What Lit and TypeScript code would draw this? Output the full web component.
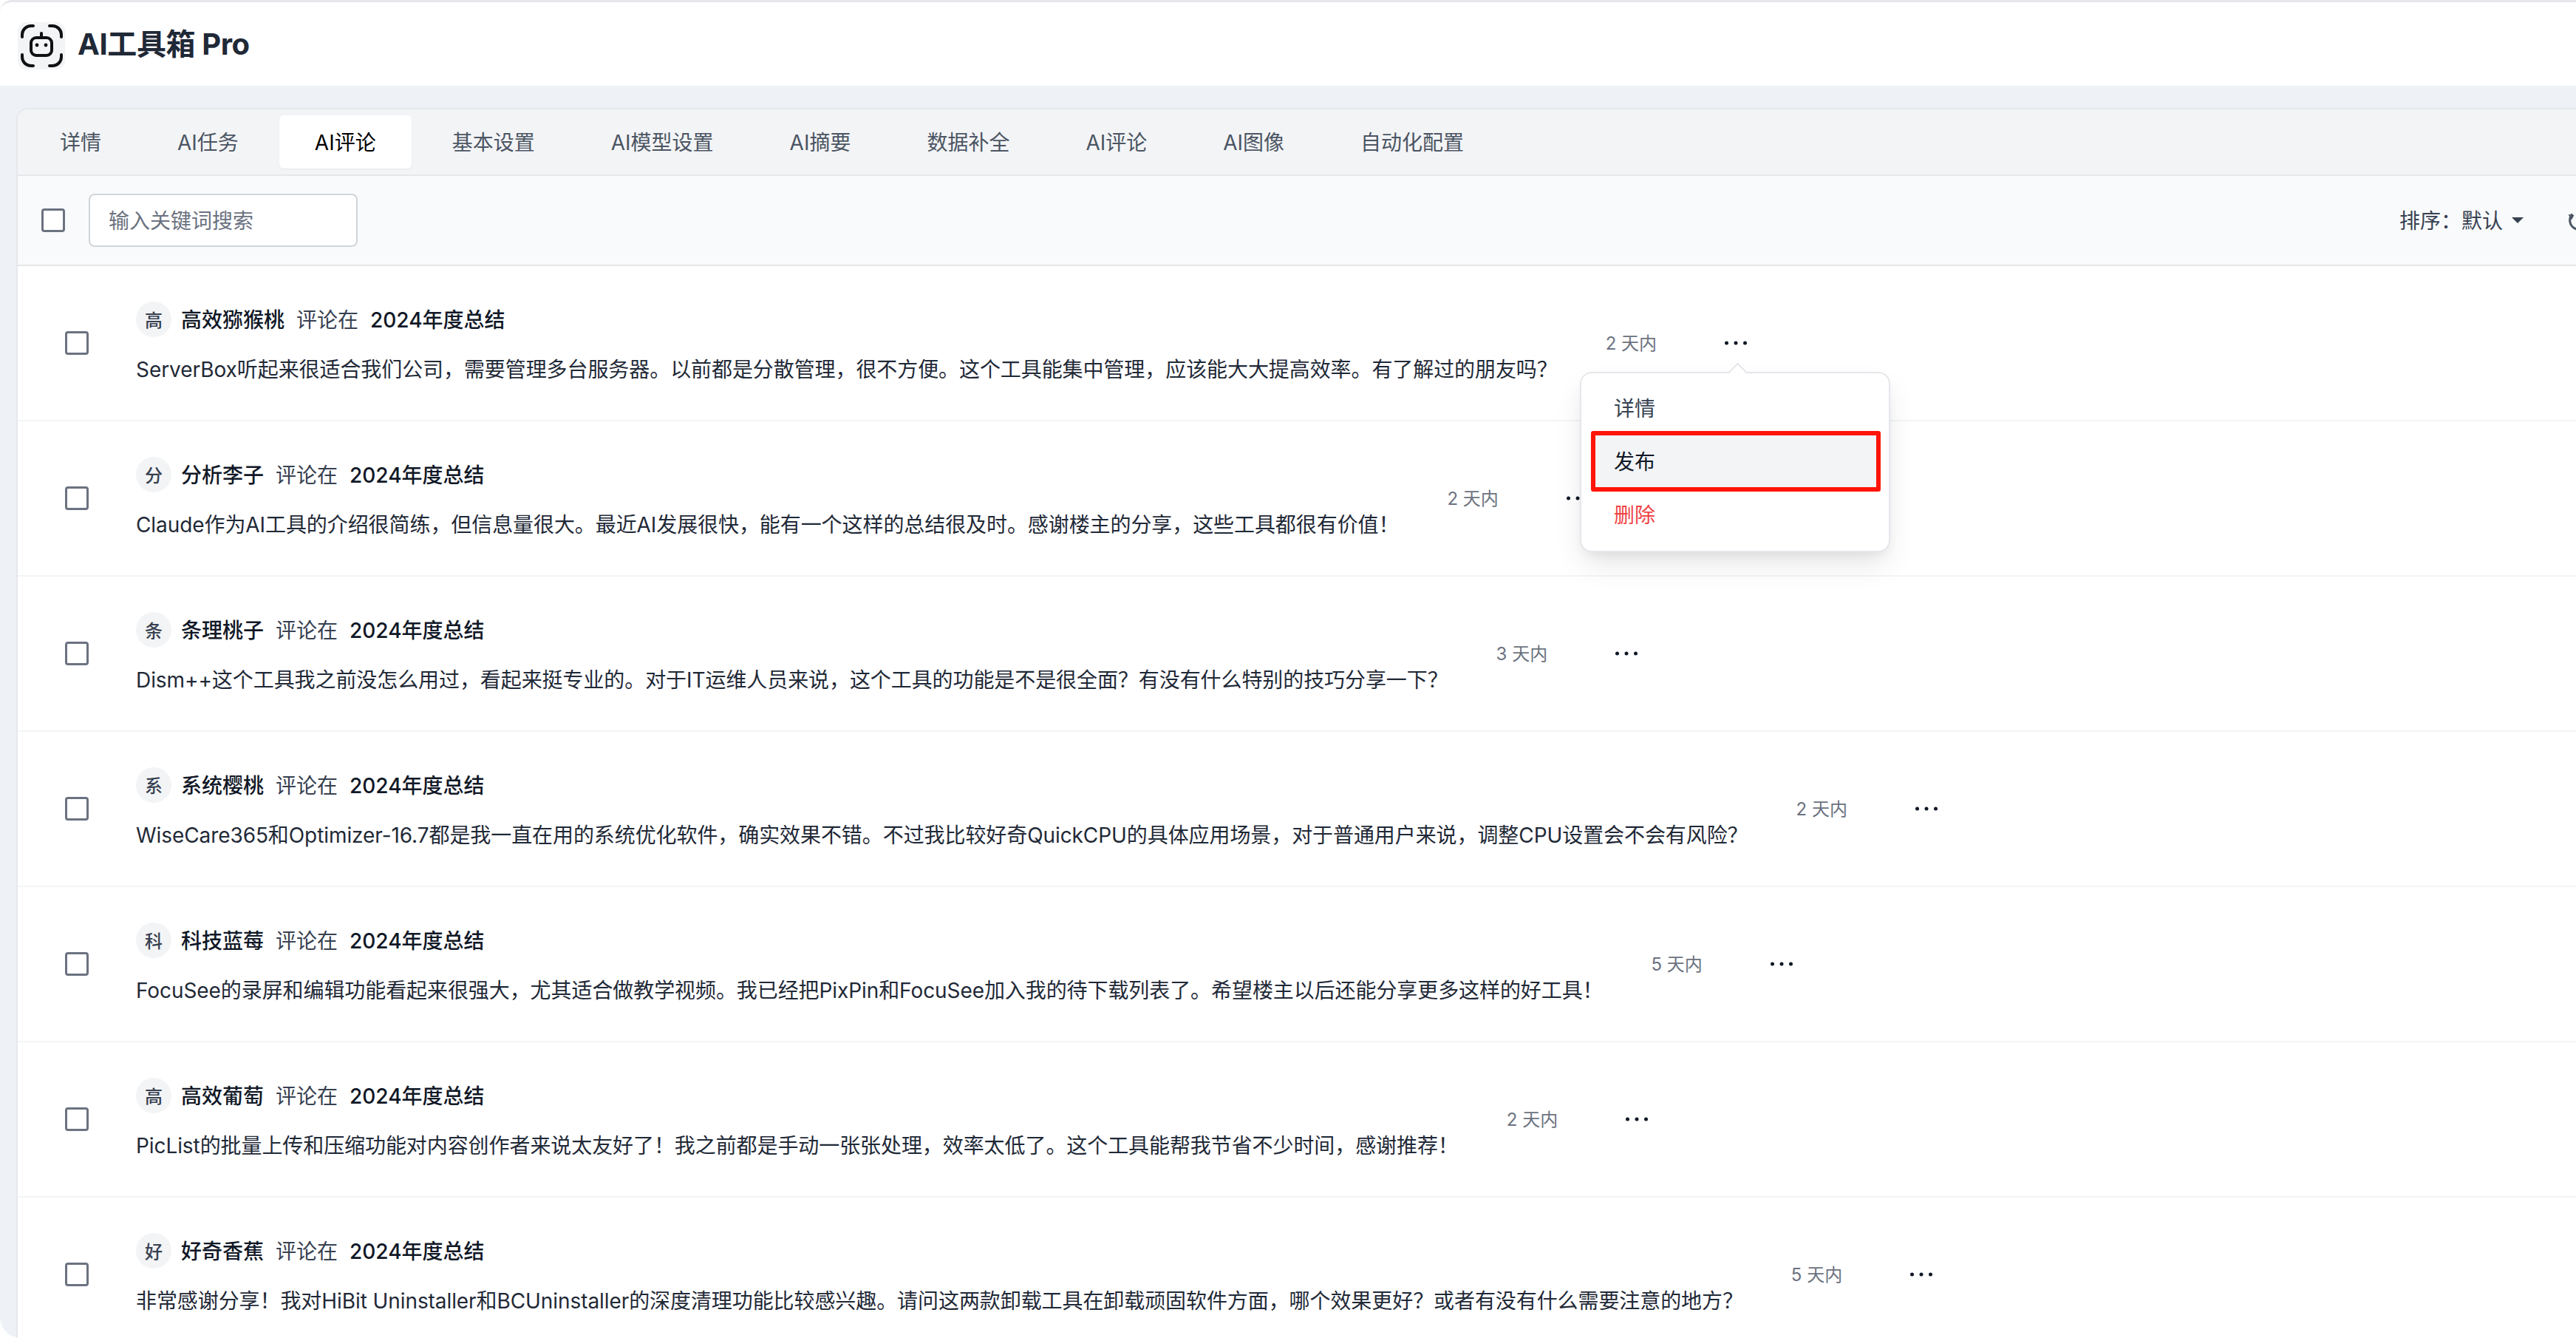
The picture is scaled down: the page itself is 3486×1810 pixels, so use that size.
import { LitElement, html, css, svg } from "lit";
import { customElement } from "lit/decorators.js";

const TABS = ["详情", "AI任务", "AI评论", "基本设置", "AI模型设置", "AI摘要", "数据补全", "AI评论", "AI图像", "自动化配置"];

const ROWS = [
  { name: "高效猕猴桃", text: "ServerBox听起来很适合我们公司，需要管理多台服务器。以前都是分散管理，很不方便。这个工具能集中管理，应该能大大提高效率。有了解过的朋友吗？", time: "2 天内" },
  { name: "分析李子", text: "Claude作为AI工具的介绍很简练，但信息量很大。最近AI发展很快，能有一个这样的总结很及时。感谢楼主的分享，这些工具都很有价值！", time: "2 天内" },
  { name: "条理桃子", text: "Dism++这个工具我之前没怎么用过，看起来挺专业的。对于IT运维人员来说，这个工具的功能是不是很全面？有没有什么特别的技巧分享一下？", time: "3 天内" },
  { name: "系统樱桃", text: "WiseCare365和Optimizer-16.7都是我一直在用的系统优化软件，确实效果不错。不过我比较好奇QuickCPU的具体应用场景，对于普通用户来说，调整CPU设置会不会有风险？", time: "2 天内" },
  { name: "科技蓝莓", text: "FocuSee的录屏和编辑功能看起来很强大，尤其适合做教学视频。我已经把PixPin和FocuSee加入我的待下载列表了。希望楼主以后还能分享更多这样的好工具！", time: "5 天内" },
  { name: "高效葡萄", text: "PicList的批量上传和压缩功能对内容创作者来说太友好了！我之前都是手动一张张处理，效率太低了。这个工具能帮我节省不少时间，感谢推荐！", time: "2 天内" },
  { name: "好奇香蕉", text: "非常感谢分享！我对HiBit Uninstaller和BCUninstaller的深度清理功能比较感兴趣。请问这两款卸载工具在卸载顽固软件方面，哪个效果更好？或者有没有什么需要注意的地方？", time: "5 天内" },
];

const logo = svg`<svg class="logo" viewBox="0 0 64 64" fill="none" stroke="#111" stroke-width="4" stroke-linecap="round">
  <path d="M6 20v-3a12 12 0 0 1 12-12h3M43 5h4a12 12 0 0 1 12 12v3M6 44v3a12 12 0 0 0 12 12h3M43 59h4a12 12 0 0 0 12-12v-3"/>
  <rect x="18" y="21" width="28" height="24" rx="7"/>
  <path d="M32 15v6"/>
  <circle cx="26" cy="31" r="2.4" fill="#111" stroke="none"/><circle cx="38" cy="31" r="2.4" fill="#111" stroke="none"/>
</svg>`;

const dots = svg`<svg class="dots" viewBox="0 0 34 8" fill="#111827"><circle cx="4.5" cy="4" r="2.5"/><circle cx="17" cy="4" r="2.5"/><circle cx="29.5" cy="4" r="2.5"/></svg>`;

@customElement("app-root")
export class AppRoot extends LitElement {
  static styles = css`
    :host {
      display: block; width: 3486px; height: 1810px; overflow: hidden; background: #fff;
      font-family: Inter, "Noto Sans CJK SC", sans-serif; font-size: 28px; color: #111827;
    }
    * { box-sizing: border-box; }
    .header {
      height: 116px; display: flex; align-items: center; gap: 17px; padding: 0 0 0 24px;
      border-top: 3px solid #e5e7eb; border-top-left-radius: 16px;
    }
    .logo { width: 64px; height: 64px; background: #f3f4f6; border-radius: 12px; flex: none; margin-top: 4px; }
    .title { font-size: 40px; font-weight: 700; color: #1f2937; line-height: 1; letter-spacing: -0.4px; }
    .main {
      height: 1694px; width: 3600px; background: #eef2f6; padding: 30px 0 0 22px;
      border-bottom-left-radius: 28px; overflow: hidden;
    }
    .card {
      width: 3499px; height: 1664px; background: #fff; border: 2px solid #e5e7eb; border-bottom: 0;
      border-top-left-radius: 16px;
    }
    .tabs {
      display: flex; gap: 7px; height: 90px; padding: 8px 8px 8px 9px; background: #f3f4f6;
      border-bottom: 2px solid #e5e7eb; border-top-left-radius: 14px;
    }
    .tab {
      height: 72px; padding: 0 48px 3px; display: flex; align-items: center; color: #4b5563; border-radius: 6px;
    }
    .tab.active { background: #fff; color: #000; box-shadow: 0 1px 2px rgba(0,0,0,.06); }
    .toolbar {
      height: 122px; display: flex; align-items: center; gap: 32px; padding: 0 0 0 32px;
      background: #f9fafb; border-bottom: 2px solid #e5e7eb;
    }
    .check { width: 32px; height: 32px; flex: none; background: #fff; border: 3px solid #6b7280; border-radius: 4px; }
    .search {
      width: 364px; height: 72px; display: flex; align-items: center; padding: 0 0 3px 25px;
      background: #fff; border: 2px solid #d1d5db; border-radius: 8px; color: #6b7280;
    }
    .sort { margin-left: auto; display: flex; align-items: center; color: #374151; }
    .label { padding-bottom: 3px; }
    .caret { width: 0; height: 0; margin-left: 12px; border: 8.5px solid transparent; border-top: 8px solid #374151; border-bottom: 0; }
    .refresh { width: 32px; height: 32px; margin: 0 14px 0 58px; flex: none; }
    .row {
      height: 210px; display: flex; align-items: center; padding-left: 64px;
      border-bottom: 2px solid #f3f4f6; background: #fff;
    }
    .row.open { position: relative; z-index: 2; }
    .body { margin-left: 64px; display: flex; flex-direction: column; gap: 24px; flex: none; }
    .meta { display: flex; align-items: center; height: 48px; }
    .avatar {
      width: 48px; height: 48px; border-radius: 50%; background: #f3f4f6; color: #374151; font-weight: 500;
      font-size: 24px; display: flex; align-items: center; justify-content: center; margin-right: 13px; padding-bottom: 2px;
    }
    .name, .target { font-weight: 500; color: #111827; padding-bottom: 3px; }
    .verb { color: #374151; margin: 0 16px; padding-bottom: 3px; }
    .text { line-height: 40px; color: #1f2937; white-space: nowrap; letter-spacing: -0.08px; }
    .time { margin-left: 65px; font-size: 24px; color: #6b7280; white-space: nowrap; flex: none; padding-bottom: 3px; }
    .more { margin-left: 90px; position: relative; width: 34px; height: 8px; flex: none; }
    .dots { display: block; width: 34px; height: 8px; }
    .menu {
      position: absolute; left: 50%; top: 43px; width: 420px; margin-left: -211px; padding: 12px;
      background: #fff; border: 2px solid #e5e7eb; border-radius: 16px;
      box-shadow: 0 20px 40px -5px rgba(0,0,0,.1), 0 8px 16px -6px rgba(0,0,0,.08);
    }
    .arrow {
      position: absolute; left: 211px; top: -11px; width: 17px; height: 17px; margin-left: -8.5px;
      background: #fff; border-top: 2px solid #e5e7eb; border-left: 2px solid #e5e7eb; transform: rotate(45deg);
    }
    .item { height: 72px; display: flex; align-items: center; padding: 0 0 5px 32px; color: #374151; position: relative; }
    .item.hover { background: #f3f4f6; color: #111827; }
    .item.danger { color: #ef4444; }
    .mark {
      position: absolute; left: 13px; top: 78px; width: 392px; height: 82px;
      border: 6px solid #ff1408; border-radius: 3px;
    }
  `;

  render() {
    return html`
      <div class="header">${logo}<div class="title">AI工具箱 Pro</div></div>
      <div class="main">
        <div class="card">
          <div class="tabs">
            ${TABS.map((t, i) => html`<div class="tab ${i === 2 ? "active" : ""}">${t}</div>`)}
          </div>
          <div class="toolbar">
            <div class="check"></div>
            <div class="search">输入关键词搜索</div>
            <div class="sort"><span class="label">排序：默认</span><span class="caret"></span>
              <svg class="refresh" viewBox="0 0 32 32" fill="none" stroke="#4b5563" stroke-width="3">
                <path d="M8 7.5A12.5 12.5 0 1 0 16 3.5"/>
                <path d="M2.5 8l8 1-3.5 6.5z" fill="#4b5563" stroke="none"/>
              </svg>
            </div>
          </div>
          ${ROWS.map((r, i) => html`
            <div class="row ${i === 0 ? "open" : ""}">
              <div class="check"></div>
              <div class="body">
                <div class="meta">
                  <div class="avatar">${r.name[0]}</div>
                  <span class="name">${r.name}</span><span class="verb">评论在</span><span class="target">2024年度总结</span>
                </div>
                <div class="text">${r.text}</div>
              </div>
              <div class="time">${r.time}</div>
              <div class="more">${dots}
                ${i === 0 ? html`
                  <div class="menu">
                    <div class="arrow"></div>
                    <div class="item">详情</div>
                    <div class="item hover">发布</div>
                    <div class="item danger">删除</div>
                    <div class="mark"></div>
                  </div>` : ""}
              </div>
            </div>`)}
        </div>
      </div>
    `;
  }
}
